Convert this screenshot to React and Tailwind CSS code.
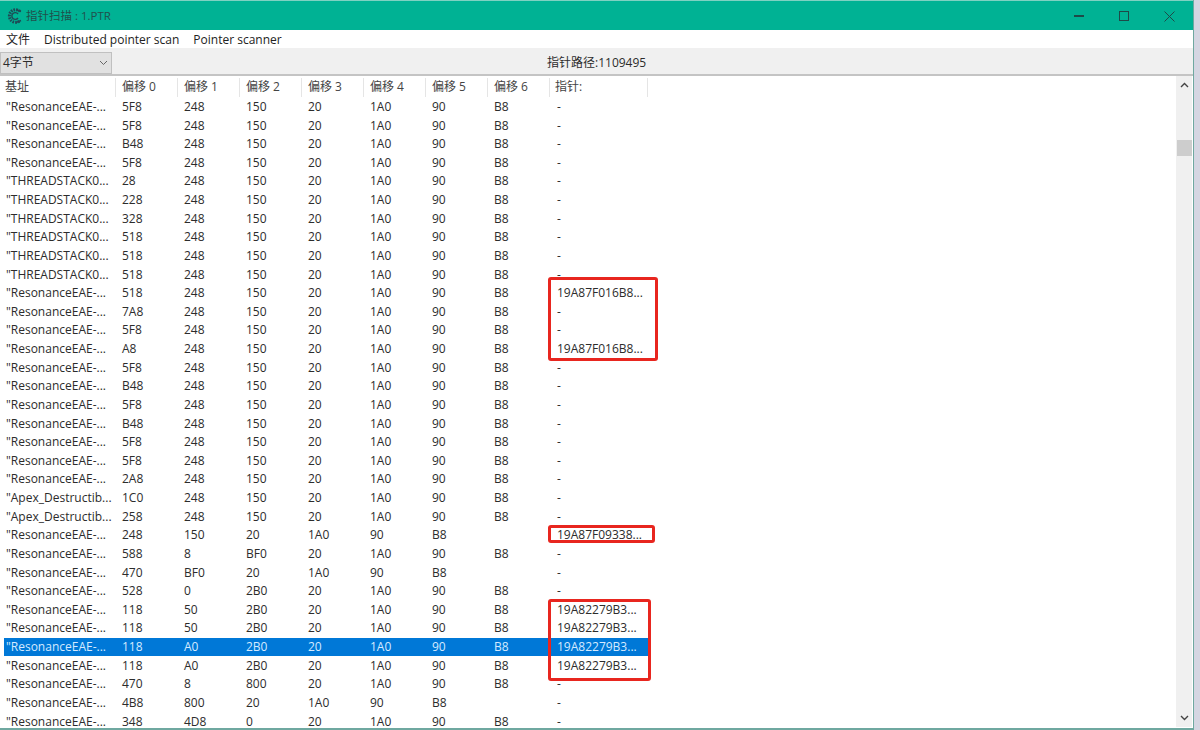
const F = "[font-family:'Open_Sans','Noto_Sans_CJK_SC',sans-serif]";

const rows = [
  ['"ResonanceEAE-...','5F8','248','150','20','1A0','90','B8','-'],
  ['"ResonanceEAE-...','5F8','248','150','20','1A0','90','B8','-'],
  ['"ResonanceEAE-...','B48','248','150','20','1A0','90','B8','-'],
  ['"ResonanceEAE-...','5F8','248','150','20','1A0','90','B8','-'],
  ['"THREADSTACK0...','28','248','150','20','1A0','90','B8','-'],
  ['"THREADSTACK0...','228','248','150','20','1A0','90','B8','-'],
  ['"THREADSTACK0...','328','248','150','20','1A0','90','B8','-'],
  ['"THREADSTACK0...','518','248','150','20','1A0','90','B8','-'],
  ['"THREADSTACK0...','518','248','150','20','1A0','90','B8','-'],
  ['"THREADSTACK0...','518','248','150','20','1A0','90','B8','-'],
  ['"ResonanceEAE-...','518','248','150','20','1A0','90','B8','19A87F016B8...'],
  ['"ResonanceEAE-...','7A8','248','150','20','1A0','90','B8','-'],
  ['"ResonanceEAE-...','5F8','248','150','20','1A0','90','B8','-'],
  ['"ResonanceEAE-...','A8','248','150','20','1A0','90','B8','19A87F016B8...'],
  ['"ResonanceEAE-...','5F8','248','150','20','1A0','90','B8','-'],
  ['"ResonanceEAE-...','B48','248','150','20','1A0','90','B8','-'],
  ['"ResonanceEAE-...','5F8','248','150','20','1A0','90','B8','-'],
  ['"ResonanceEAE-...','B48','248','150','20','1A0','90','B8','-'],
  ['"ResonanceEAE-...','5F8','248','150','20','1A0','90','B8','-'],
  ['"ResonanceEAE-...','5F8','248','150','20','1A0','90','B8','-'],
  ['"ResonanceEAE-...','2A8','248','150','20','1A0','90','B8','-'],
  ['"Apex_Destructib...','1C0','248','150','20','1A0','90','B8','-'],
  ['"Apex_Destructib...','258','248','150','20','1A0','90','B8','-'],
  ['"ResonanceEAE-...','248','150','20','1A0','90','B8','','19A87F09338...'],
  ['"ResonanceEAE-...','588','8','BF0','20','1A0','90','B8','-'],
  ['"ResonanceEAE-...','470','BF0','20','1A0','90','B8','','-'],
  ['"ResonanceEAE-...','528','0','2B0','20','1A0','90','B8','-'],
  ['"ResonanceEAE-...','118','50','2B0','20','1A0','90','B8','19A82279B3...'],
  ['"ResonanceEAE-...','118','50','2B0','20','1A0','90','B8','19A82279B3...'],
  ['"ResonanceEAE-...','118','A0','2B0','20','1A0','90','B8','19A82279B3...'],
  ['"ResonanceEAE-...','118','A0','2B0','20','1A0','90','B8','19A82279B3...'],
  ['"ResonanceEAE-...','470','8','800','20','1A0','90','B8','-'],
  ['"ResonanceEAE-...','4B8','800','20','1A0','90','B8','','-'],
  ['"ResonanceEAE-...','348','4D8','0','20','1A0','90','B8','-'],
];
const headers = ['基址','偏移 0','偏移 1','偏移 2','偏移 3','偏移 4','偏移 5','偏移 6','指针:'];

function Gear() {
  return (
    <svg width="16" height="16" viewBox="0 0 16 16" fill="none" stroke="#1f4a55">
      <path d="M13 3.4A6.3 6.3 0 1 0 13 12.6" strokeWidth="3" strokeDasharray="1.6 1" />
      <path d="M11 6A3.4 3.4 0 1 0 11 10" strokeWidth="1.4" />
      <path d="M9 1.5l5 2M9 14.5l5-2" strokeWidth="1.4" />
    </svg>
  );
}

function Row({ cells, selected }) {
  return (
    <div className={`flex h-[18.64px] shrink-0 items-center whitespace-nowrap leading-[12px] ${selected ? 'bg-[#0078d7] text-[#d5eaff]' : ''}`}>
      <div className="w-[112px] pl-[2px]">{cells[0]}</div>
      {cells.slice(1, 8).map((c, i) => (
        <div key={i} className="w-[62px] pl-[6px]">{c}</div>
      ))}
      <div className="w-[98px] pl-[7px]">{cells[8]}</div>
    </div>
  );
}

export default function App() {
  return (
    <div className={`relative flex h-[730px] w-[1200px] overflow-hidden bg-[#d5d6e2] text-[12px] text-[#2c2c2c] ${F}`}>
      <div className="flex h-[730px] w-[1194px] shrink-0 flex-col border-r border-b-[2px] border-[#6fa8a0] bg-white">
        <div className="flex h-[30px] shrink-0 items-center border-t border-[#7fd1c2] bg-[#00b294] pl-[7px] pt-[1px] text-[#20504c]">
          <Gear />
          <span className="ml-[3px] text-[11.5px]">指针扫描 : 1.PTR</span>
          <div className="ml-auto flex items-center text-[#1e4a48]">
            <div className="mr-[35px] h-[1.5px] w-[10px] bg-[#1e4a48]" />
            <div className="mr-[35px] h-[10px] w-[10px] border border-[#1e4a48]" />
            <svg className="mr-[18px]" width="11" height="11" viewBox="0 0 11 11" stroke="#1e4a48" strokeWidth="1">
              <path d="M0.5 0.5L10.5 10.5M10.5 0.5L0.5 10.5" />
            </svg>
          </div>
        </div>
        <div className="flex h-[18px] shrink-0 items-center pl-[6px] pt-[2px] text-[12px] text-[#222]">
          <span>文件</span>
          <span className="ml-[14px]">Distributed pointer scan</span>
          <span className="ml-[14px]">Pointer scanner</span>
        </div>
        <div className="flex h-[28px] shrink-0 items-end border-b-[2px] border-[#c4c4c4] bg-[#f0f0f0]">
          <div className="flex h-[22px] w-[112px] shrink-0 items-center justify-between border border-[#c0c0c0] bg-[#e1e1e1] pl-[2px] pr-[3px] text-[12px]">
            <span>4字节</span>
            <svg width="9" height="6" viewBox="0 0 9 6" fill="none" stroke="#666" strokeWidth="1">
              <path d="M1 1l3.5 3.5L8 1" />
            </svg>
          </div>
          <span className="ml-[435px] pb-[2px] text-[12px]">指针路径:1109495</span>
        </div>
        <div className="flex min-h-0 flex-1">
          <div className="relative min-w-0 flex-1 pl-[4px] pt-[1px]">
            <div className="flex h-[20.6px] w-[644px] items-center pb-[1px] pt-[1px] text-[#444]">
              {headers.map((h, i) => (
                <div
                  key={h}
                  className={`flex h-full items-center border-r border-[#e5e5e5] ${i === 0 ? 'w-[112px] pl-[1px]' : i === 8 ? 'w-[98px] pl-[5px]' : 'w-[62px] pl-[6px]'}`}
                >
                  {h}
                </div>
              ))}
            </div>
            <div className="flex w-[644px] flex-col">
              {rows.map((r, i) => (
                <Row key={i} cells={r} selected={i === 29} />
              ))}
            </div>
            <div className="absolute left-[548px] top-[201px] h-[84px] w-[110px] rounded-[3px] border-[3px] border-[#e8261f]" />
            <div className="absolute left-[548px] top-[449px] h-[18px] w-[107px] rounded-[3px] border-[3px] border-[#e8261f]" />
            <div className="absolute left-[548px] top-[523px] h-[82px] w-[103px] rounded-[3px] border-[3px] border-[#e8261f]" />
          </div>
          <div className="mb-[1px] mr-[1px] flex w-[16px] shrink-0 flex-col items-center justify-between bg-[#f0f0f0] py-[6px]">
            <svg width="9" height="6" viewBox="0 0 9 6" fill="none" stroke="#444" strokeWidth="1.4">
              <path d="M1 5l3.5-3.5L8 5" />
            </svg>
            <svg width="9" height="6" viewBox="0 0 9 6" fill="none" stroke="#444" strokeWidth="1.4">
              <path d="M1 1l3.5 3.5L8 1" />
            </svg>
          </div>
        </div>
      </div>
      <div className="absolute left-[1177px] top-[140px] h-[16px] w-[15px] bg-[#cdcdcd]" />
    </div>
  );
}
